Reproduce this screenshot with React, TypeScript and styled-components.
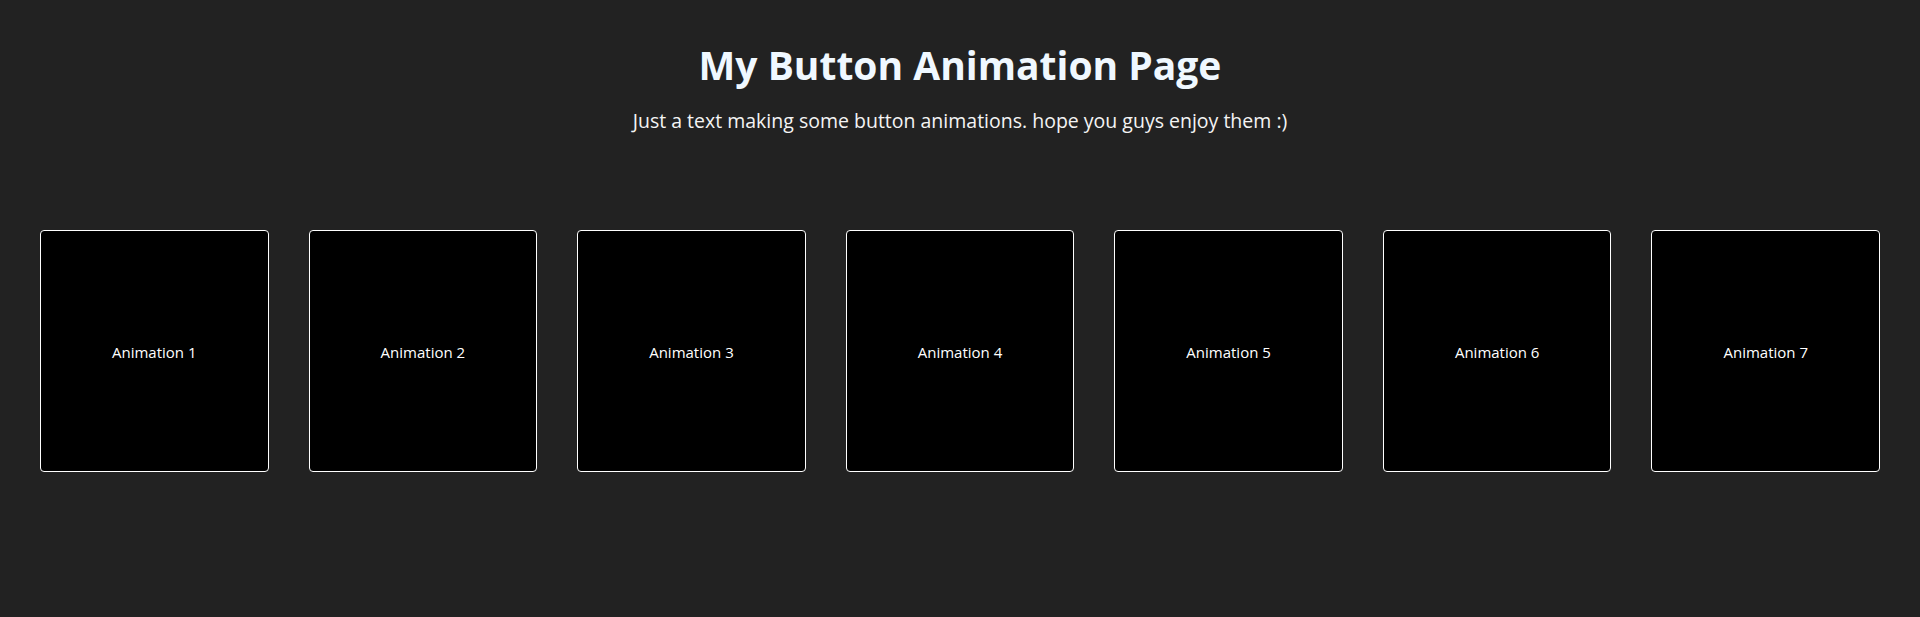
import React from "react";
import styled, { createGlobalStyle } from "styled-components";

const Global = createGlobalStyle`
  html, body { margin: 0; padding: 0; background: #222222; }
  body { font-family: "Open Sans", "Noto Sans", sans-serif; color: #ffffff; }
`;

const Page = styled.div`
  display: flex;
  flex-direction: column;
  align-items: center;
  min-height: 617px;
`;

const Header = styled.header`
  display: flex;
  flex-direction: column;
  align-items: center;
  padding-top: 38px;
`;

const Title = styled.h1`
  margin: 0;
  font-size: 39px;
  font-weight: 700;
  line-height: 54px;
  color: #f0f8ff;
`;

const Subtitle = styled.p`
  margin: 16px 0 0;
  font-size: 19.5px;
  line-height: 26px;
  color: #f4f4f4;
`;

const Row = styled.div`
  display: flex;
  gap: 40px;
  width: 100%;
  box-sizing: border-box;
  padding: 0 40px;
  margin-top: 96px;
`;

const Card = styled.button`
  flex: 1;
  height: 242px;
  box-sizing: border-box;
  background: #000000;
  border: 1px solid #ffffff;
  border-radius: 4px;
  color: #ffffff;
  font-family: "Open Sans", "Noto Sans", sans-serif;
  font-size: 15px;
  display: flex;
  align-items: center;
  justify-content: center;
  padding: 2px 0 0;
  cursor: pointer;
`;

export default function App() {
  const items = [1, 2, 3, 4, 5, 6, 7];
  return (
    <Page>
      <Global />
      <Header>
        <Title>My Button Animation Page</Title>
        <Subtitle>Just a text making some button animations. hope you guys enjoy them :)</Subtitle>
      </Header>
      <Row>
        {items.map((n) => (
          <Card key={n}>Animation {n}</Card>
        ))}
      </Row>
    </Page>
  );
}
